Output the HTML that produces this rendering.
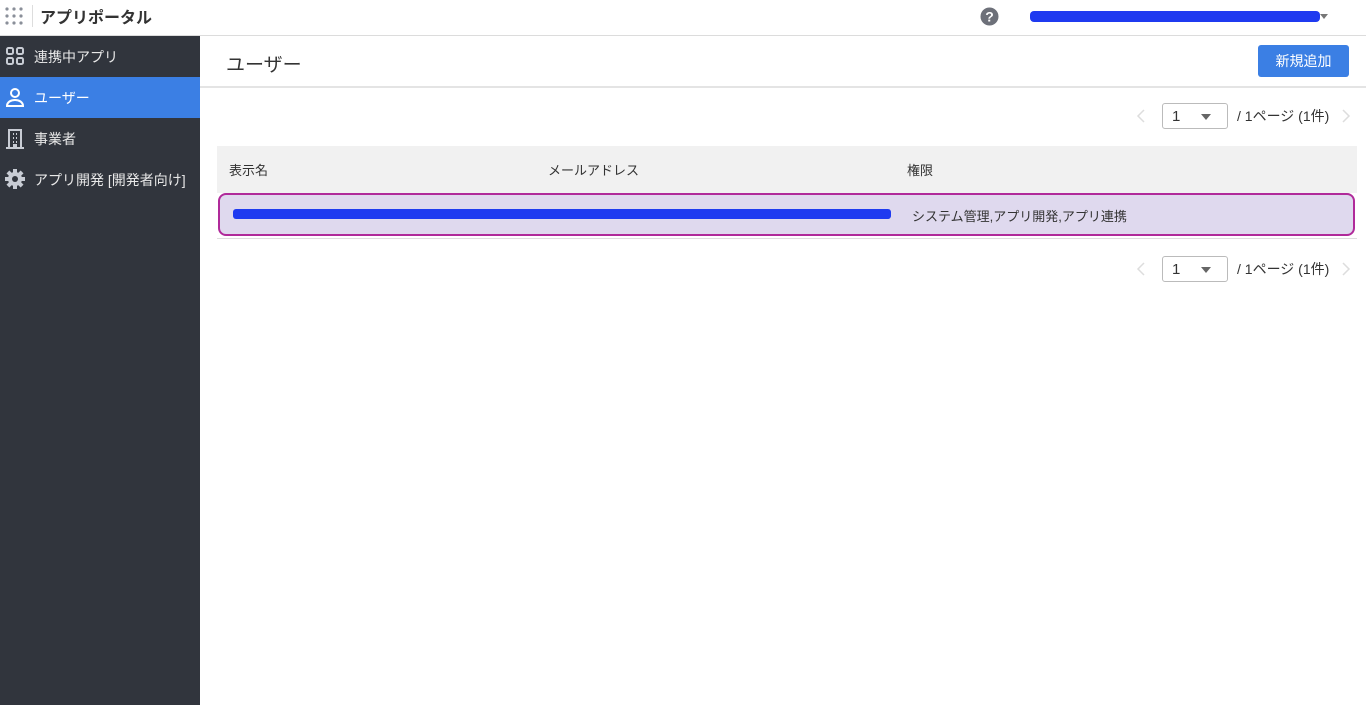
<!DOCTYPE html>
<html><head><meta charset="utf-8"><style>
*{box-sizing:border-box;margin:0;padding:0}
body{width:1366px;height:705px;overflow:hidden;font-family:"Liberation Sans","Noto Sans CJK JP",sans-serif;background:#fff;color:#333;position:relative}
.top{position:absolute;left:0;top:0;width:1366px;height:36px;border-bottom:1px solid #dcdcdc;background:#fff}
.side{position:absolute;left:0;top:36px;width:200px;height:669px;background:#31353d}
.item{height:41px;display:flex;align-items:center;color:#e8e8e8;font-size:14px;padding-left:34px;position:relative}
.item.act{background:#3b7fe4;color:#fff}
.item svg{position:absolute;left:5px;top:10px}
.abs{position:absolute}
.pg{position:absolute;font-size:14px;color:#333}
.sel{position:absolute;width:66px;height:26px;border:1px solid #bbb;border-radius:3px;background:#fff}
</style></head><body>
<div class="top">
<svg class="abs" style="left:4px;top:6px" width="20" height="20"><g fill="#8a8f99"><circle cx="3" cy="3" r="1.6"/><circle cx="10" cy="3" r="1.6"/><circle cx="17" cy="3" r="1.6"/><circle cx="3" cy="10" r="1.6"/><circle cx="10" cy="10" r="1.6"/><circle cx="17" cy="10" r="1.6"/><circle cx="3" cy="17" r="1.6"/><circle cx="10" cy="17" r="1.6"/><circle cx="17" cy="17" r="1.6"/></g></svg>
<div class="abs" style="left:32px;top:5px;width:1px;height:22px;background:#ddd"></div>
<div class="abs" style="left:40px;top:4px;font-size:16px;font-weight:bold;color:#333">アプリポータル</div>
<svg class="abs" style="left:980px;top:7px" width="19" height="19"><circle cx="9.5" cy="9.5" r="9" fill="#6d7079"/><text x="9.5" y="14.5" fill="#fff" font-size="14" font-weight="bold" text-anchor="middle" font-family="Liberation Sans">?</text></svg>
<div class="abs" style="left:1030px;top:11px;width:290px;height:11px;background:#1f3af0;border-radius:4px"></div>
<div class="abs" style="left:1320px;top:14px;border:4px solid transparent;border-top:5px solid #777"></div>
</div>
<div class="side">
<div class="item"><svg width="20" height="20" fill="none" stroke="#c8ccd4" stroke-width="2"><rect x="2" y="2" width="6" height="6" rx="1.5"/><rect x="12" y="2" width="6" height="6" rx="1.5"/><rect x="2" y="12" width="6" height="6" rx="1.5"/><rect x="12" y="12" width="6" height="6" rx="1.5"/></svg>連携中アプリ</div>
<div class="item act"><svg width="20" height="22" fill="none" stroke="#fff" stroke-width="2"><circle cx="10" cy="6" r="4"/><path d="M2 19c0-4 4-6 8-6s8 2 8 6z"/></svg>ユーザー</div>
<div class="item"><svg width="20" height="22" fill="none" stroke="#c8ccd4" stroke-width="2"><rect x="4" y="2" width="12" height="18"/><path d="M8 6h1M11 6h1M8 10h1M11 10h1M8 14h1M11 14h1M9 20v-3h2v3M1 20h18"/></svg>事業者</div>
<div class="item"><svg width="22" height="22"><g transform="translate(10,10)" fill="#c8ccd4"><circle r="7"/><g id="t"><rect x="-2" y="-10" width="4" height="5"/></g><use href="#t" transform="rotate(45)"/><use href="#t" transform="rotate(90)"/><use href="#t" transform="rotate(135)"/><use href="#t" transform="rotate(180)"/><use href="#t" transform="rotate(225)"/><use href="#t" transform="rotate(270)"/><use href="#t" transform="rotate(315)"/><circle r="3" fill="#31353d"/></g></svg>アプリ開発 [開発者向け]</div>
</div>
<div class="abs" style="left:226px;top:50px;font-size:19px;color:#333">ユーザー</div>
<div class="abs" style="left:1258px;top:45px;width:91px;height:32px;background:#3b7fe4;border-radius:3px;color:#fff;font-size:14px;text-align:center;line-height:32px">新規追加</div>
<div class="abs" style="left:200px;top:86px;width:1166px;height:2px;background:#e4e4e4"></div>
<svg class="abs" style="left:1136px;top:109px" width="10" height="14"><path d="M8 1L2 7l6 6" fill="none" stroke="#ddd" stroke-width="1.5"/></svg>
<div class="sel" style="left:1162px;top:103px"><span class="abs" style="left:9px;top:4px;font-size:15px">1</span><span class="abs" style="left:38px;top:10px;border:5px solid transparent;border-top:6px solid #666"></span></div>
<div class="pg" style="left:1237px;top:106px">/ 1ページ (1件)</div>
<svg class="abs" style="left:1341px;top:109px" width="10" height="14"><path d="M2 1l6 6-6 6" fill="none" stroke="#ddd" stroke-width="1.5"/></svg>
<div class="abs" style="left:217px;top:146px;width:1140px;height:47px;background:#f1f1f1"></div>
<div class="pg" style="left:229px;top:160px;font-size:13px">表示名</div>
<div class="pg" style="left:548px;top:160px;font-size:13px">メールアドレス</div>
<div class="pg" style="left:907px;top:160px;font-size:13px">権限</div>
<div class="abs" style="left:218px;top:193px;width:1137px;height:43px;background:#dfd9ee;border:2px solid #b02a9a;border-radius:8px"></div>
<div class="abs" style="left:233px;top:209px;width:658px;height:10px;background:#1f3af0;border-radius:3px"></div>
<div class="pg" style="left:912px;top:206px;font-size:13px">システム管理,アプリ開発,アプリ連携</div>
<div class="abs" style="left:217px;top:238px;width:1140px;height:1px;background:#ddd"></div>
<svg class="abs" style="left:1136px;top:262px" width="10" height="14"><path d="M8 1L2 7l6 6" fill="none" stroke="#ddd" stroke-width="1.5"/></svg>
<div class="sel" style="left:1162px;top:256px"><span class="abs" style="left:9px;top:4px;font-size:15px">1</span><span class="abs" style="left:38px;top:10px;border:5px solid transparent;border-top:6px solid #666"></span></div>
<div class="pg" style="left:1237px;top:259px">/ 1ページ (1件)</div>
<svg class="abs" style="left:1341px;top:262px" width="10" height="14"><path d="M2 1l6 6-6 6" fill="none" stroke="#ddd" stroke-width="1.5"/></svg>
</body></html>
